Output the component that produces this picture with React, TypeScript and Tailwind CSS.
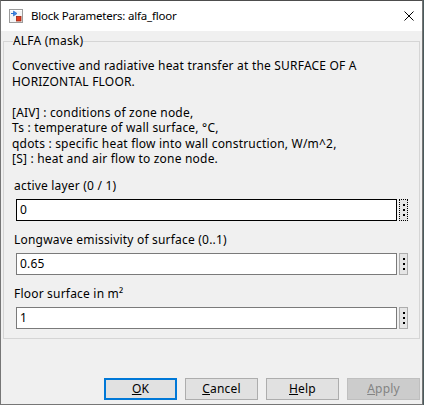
import React from "react";

const FONT = { fontFamily: '"Noto Sans", "Segoe UI", sans-serif' };

const description = [
  "Convective and radiative heat transfer at the SURFACE OF A",
  "HORIZONTAL FLOOR.",
  "",
  "[AIV] : conditions of zone node,",
  "Ts : temperature of wall surface, °C,",
  "qdots : specific heat flow into wall construction, W/m^2,",
  "[S] : heat and air flow to zone node.",
];

const params = [
  { label: "active layer (0 / 1)", value: "0", focused: true },
  { label: "Longwave emissivity of surface (0..1)", value: "0.65", focused: false },
  { label: "Floor surface in m²", value: "1", focused: false },
];

export default function App() {
  return (
    <div className="flex h-[405px] w-[424px] bg-[#4a5a5c] text-[12px] text-black" style={FONT}>
      <div className="flex h-[405px] w-[423px] flex-col border border-[#767676] border-t-[#4d4d4d] bg-[#f0f0f0]">
        <TitleBar />

        <div className="flex flex-1 flex-col tracking-[0.2px]">
          <fieldset className="mx-[2px] mt-[2px] border border-[#d5d5d5] px-0 pb-[9px]">
            <legend className="ml-[9px] px-0 leading-[16px]">ALFA (mask)</legend>
            <div className="pl-[8px] pr-[11px] pt-[9px]">
              <div className="leading-[15.5px]">
                {description.map((line, i) => (
                  <div key={i} className="h-[15.5px] whitespace-nowrap">
                    {line}
                  </div>
                ))}
              </div>

              <div className="mt-[11px] flex flex-col gap-[11px]">
                {params.map((p) => (
                  <ParamRow key={p.label} {...p} />
                ))}
              </div>
            </div>
          </fieldset>

          <div className="mt-auto flex justify-end gap-[8px] pb-[4px] pr-[2px]">
            <DialogButton mnemonic="O" rest="K" primary />
            <DialogButton mnemonic="C" rest="ancel" />
            <DialogButton mnemonic="H" rest="elp" />
            <DialogButton mnemonic="A" rest="pply" disabled />
          </div>
        </div>
      </div>
    </div>
  );
}

function TitleBar() {
  return (
    <div className="flex h-[30px] flex-shrink-0 items-center bg-white pl-[8px] pr-[8px]">
      <BlockIcon />
      <span className="ml-[8px] text-[11.5px] leading-[16px] tracking-[-0.2px]">
        Block Parameters: alfa_floor
      </span>
      <svg className="ml-auto" width="10" height="10" viewBox="0 0 10 10">
        <path d="M0.5 0.5 L9.5 9.5 M9.5 0.5 L0.5 9.5" stroke="#000" strokeWidth="1" fill="none" />
      </svg>
    </div>
  );
}

function BlockIcon() {
  return (
    <svg width="14" height="14" viewBox="0 0 14 14">
      <rect x="0.5" y="0.5" width="13" height="13" fill="#f4f4f4" stroke="#9b9b9b" />
      <rect x="1" y="1" width="12" height="1" fill="#ffffff" />
      <path d="M2 4.5 H5" stroke="#2a6fd1" strokeWidth="1" />
      <path d="M4.5 2 L8 4.5 L4.5 7 Z" fill="#3d86e6" stroke="#1f5fb8" strokeWidth="0.6" />
      <rect x="7.5" y="7.5" width="4.5" height="4.5" fill="#e2391b" stroke="#9c2410" strokeWidth="0.8" />
    </svg>
  );
}

function ParamRow({ label, value, focused }: { label: string; value: string; focused: boolean }) {
  return (
    <div className="flex flex-col">
      <div className="ml-[2px] h-[16px] leading-[16px]">{label}</div>
      <div className="ml-[4px] mt-[5px] flex items-stretch gap-[2px]">
        <div
          className={`flex h-[22px] flex-1 items-center border bg-white pl-[3px] ${
            focused ? "border-black" : "border-[#7a7a7a]"
          }`}
        >
          {value}
        </div>
        <div
          className={`flex w-[9px] flex-col items-center justify-center gap-[3px] bg-[#e6e6e6] ${
            focused ? "border border-dotted border-black" : "border border-[#adadad]"
          }`}
        >
          <span className="h-[2px] w-[2px] bg-black" />
          <span className="h-[2px] w-[2px] bg-black" />
          <span className="h-[2px] w-[2px] bg-black" />
        </div>
      </div>
    </div>
  );
}

function DialogButton({
  mnemonic,
  rest,
  primary,
  disabled,
}: {
  mnemonic: string;
  rest: string;
  primary?: boolean;
  disabled?: boolean;
}) {
  const tone = primary
    ? "border-2 border-[#0078d7] bg-[#e1e1e1] text-black"
    : disabled
      ? "border border-[#bfbfbf] bg-[#cccccc] text-[#838383]"
      : "border border-[#adadad] bg-[#e1e1e1] text-black";
  return (
    <button
      type="button"
      className={`flex h-[22px] w-[73px] items-center justify-center leading-[16px] ${tone}`}
    >
      <span className="underline underline-offset-[1px]">{mnemonic}</span>
      {rest}
    </button>
  );
}
